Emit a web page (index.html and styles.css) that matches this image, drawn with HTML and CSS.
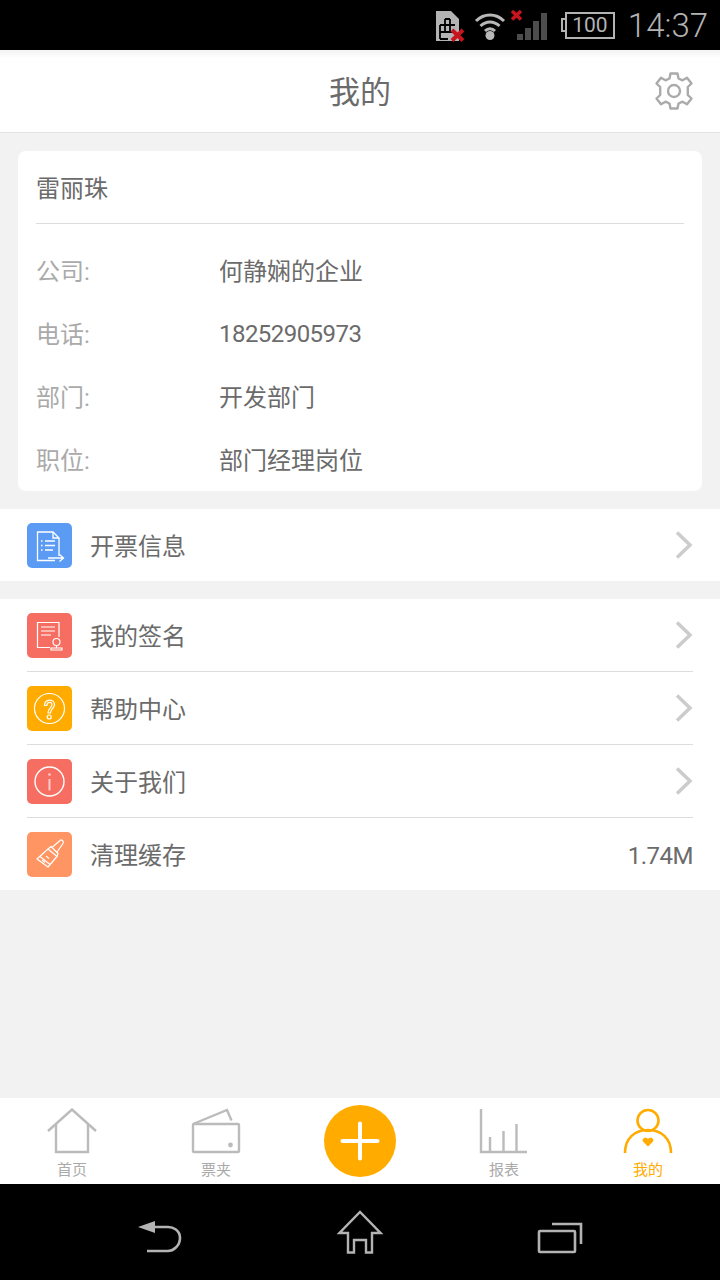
FILE: index.html
```html
<!DOCTYPE html>
<html lang="zh-CN">
<head>
<meta charset="utf-8">
<title>我的</title>
<link rel="stylesheet" href="styles.css">
</head>
<body>
<div class="app">
  <div class="statusbar">
    <svg class="st-sim" width="29" height="32" viewBox="0 0 29 32">
      <path d="M0 1H15L23 9V31H0Z" fill="#b3b3b3"/>
      <path d="M9 15H19M9 9V22M14 9H9M14 9V22M4 22H17M4 15V29M4 15H9M4 29H12" fill="none" stroke="#000" stroke-width="1.800"/>
      <path d="M16 20L27 30.500M27 20L16 30.500" stroke="#c8141e" stroke-width="4"/>
    </svg>
    <svg class="st-wifi" width="32" height="30" viewBox="0 0 32 30">
      <path d="M2 10C10 2 22 2 30 10M6.500 15C12 9.500 20 9.500 25.500 15M11 20C14 17 18 17 21 20" fill="none" stroke="#b8b8b8" stroke-width="3"/>
      <circle cx="16" cy="24.500" r="4.500" fill="#b8b8b8"/>
    </svg>
    <svg class="st-signal" width="38" height="32" viewBox="0 0 38 32">
      <path d="M1 1L10 9.500M10 1L1 9.500" stroke="#c8141e" stroke-width="3.500"/>
      <path d="M6 24h6v6H6zM14 18h6v12h-6zM22 11h6v19h-6zM30 3h6v27h-6z" fill="#4d4d4d"/>
    </svg>
    <div class="st-battery">
      <span class="st-battery-cap"></span>
      <span class="st-battery-body">100</span>
    </div>
    <span class="st-time">14:37</span>
  </div>

  <header class="topbar">
    <h1 class="topbar-title">我的</h1>
    <svg class="topbar-gear" width="40" height="40" viewBox="0 0 40 40">
      <path d="M16.500 2.500H23.500L24.500 7.500L28.500 9.300L33 6.700L37.500 12.500L33.800 16L33.800 24L37.500 27.500L33 33.300L28.500 30.700L24.500 32.500L23.500 37.500H16.500L15.500 32.500L11.500 30.700L7 33.300L2.500 27.500L6.200 24L6.200 16L2.500 12.500L7 6.700L11.500 9.300L15.500 7.500Z" fill="none" stroke="#aaa" stroke-width="2.400" stroke-linejoin="round"/>
      <circle cx="20" cy="20" r="6" fill="none" stroke="#aaa" stroke-width="2.400"/>
    </svg>
  </header>

  <main class="content">
    <section class="card">
      <div class="card-name">雷丽珠</div>
      <dl class="info">
        <div class="info-row"><dt>公司:</dt><dd>何静娴的企业</dd></div>
        <div class="info-row"><dt>电话:</dt><dd class="num">18252905973</dd></div>
        <div class="info-row"><dt>部门:</dt><dd>开发部门</dd></div>
        <div class="info-row"><dt>职位:</dt><dd>部门经理岗位</dd></div>
      </dl>
    </section>

    <ul class="group">
      <li class="item">
        <span class="item-icon blue">
          <svg width="45" height="45" viewBox="0 0 45 45" fill="none" stroke="#fff" stroke-width="1.300">
            <path d="M32 33V15L26 9H10.500V37.500H28"/>
            <path d="M26 9V15H32"/>
            <path d="M18 18H28M18 22.500H28M18 27H26M14 18H15.500M14 22.500H15.500M14 27H15.500"/>
            <path d="M21 35H36M32.500 31.500L36.500 35L32.500 38.500"/>
          </svg>
        </span>
        <span class="item-label">开票信息</span>
        <svg class="chevron" width="18" height="28" viewBox="0 0 18 28"><path d="M2 1.500L15 14L2 26.500" fill="none" stroke="#ccc" stroke-width="3.500"/></svg>
      </li>
    </ul>

    <ul class="group">
      <li class="item">
        <span class="item-icon red">
          <svg width="45" height="45" viewBox="0 0 45 45" fill="none" stroke="#fff" stroke-width="1.200">
            <path d="M23 34.500H10.500V9.500H32V24"/>
            <path d="M14 14H28M14 18H28M14 22H24"/>
            <circle cx="29.500" cy="29" r="3.500"/>
            <path d="M29.500 32.500V35M24 35H35V37H24Z"/>
          </svg>
        </span>
        <span class="item-label">我的签名</span>
        <svg class="chevron" width="18" height="28" viewBox="0 0 18 28"><path d="M2 1.500L15 14L2 26.500" fill="none" stroke="#ccc" stroke-width="3.500"/></svg>
      </li>
      <li class="item">
        <span class="item-icon amber">
          <svg width="45" height="45" viewBox="0 0 45 45" fill="none" stroke="#fff" stroke-width="1.200">
            <circle cx="22.500" cy="22.500" r="15"/>
            <path d="M17.500 19.500C17.500 12.500 27.500 12.500 27.500 18.500C27.500 22.500 23.500 22.500 23.500 27H21C21 22 25 22 25 18.500C25 15.500 20 15.500 19.800 19.500Z"/>
            <circle cx="22.200" cy="31" r="2"/>
          </svg>
        </span>
        <span class="item-label">帮助中心</span>
        <svg class="chevron" width="18" height="28" viewBox="0 0 18 28"><path d="M2 1.500L15 14L2 26.500" fill="none" stroke="#ccc" stroke-width="3.500"/></svg>
      </li>
      <li class="item">
        <span class="item-icon red">
          <svg width="45" height="45" viewBox="0 0 45 45" fill="none" stroke="#fff">
            <circle cx="22.500" cy="22.500" r="14.500" stroke-width="1.400"/>
            <path d="M22.500 20V31.500" stroke="#fcc" stroke-width="2"/>
            <circle cx="22.500" cy="15.500" r="1.300" fill="#fcc" stroke="none"/>
          </svg>
        </span>
        <span class="item-label">关于我们</span>
        <svg class="chevron" width="18" height="28" viewBox="0 0 18 28"><path d="M2 1.500L15 14L2 26.500" fill="none" stroke="#ccc" stroke-width="3.500"/></svg>
      </li>
      <li class="item">
        <span class="item-icon orange">
          <svg width="45" height="45" viewBox="0 0 45 45" fill="none" stroke="#fff" stroke-width="1.200" stroke-linejoin="round">
            <path d="M10 27L21 35L30 24.500L21 17Z"/>
            <path d="M13 24.500L23 32.500"/>
            <path d="M21 17L24 14.500L31 21.500L30 24.500"/>
            <path d="M25 15.500L33 8.500C34.500 7 37.500 9.500 36 11.500L30 20"/>
            <path d="M15 28L18 30.500M19 24L22 26.500"/>
          </svg>
        </span>
        <span class="item-label">清理缓存</span>
        <span class="item-value">1.74M</span>
      </li>
    </ul>
  </main>

  <nav class="tabs">
    <div class="tab">
      <svg width="50" height="46" viewBox="0 0 50 46" fill="none" stroke="#bbb" stroke-width="2.400">
        <path d="M1 23L25 1.500L49 23"/>
        <path d="M9 16V44H41V16"/>
      </svg>
      <span>首页</span>
    </div>
    <div class="tab">
      <svg width="50" height="46" viewBox="0 0 50 46" fill="none" stroke="#bbb" stroke-width="2.400">
        <rect x="2" y="16" width="46" height="28" rx="1"/>
        <path d="M2 16L36 2L40.500 12.500"/>
        <circle cx="39.500" cy="37" r="2.400" fill="#bbb" stroke="none"/>
      </svg>
      <span>票夹</span>
    </div>
    <div class="tab tab-add">
      <span class="tab-add-btn">
        <svg width="40" height="40" viewBox="0 0 40 40"><path d="M20 2.500V37.500M2.500 20H37.500" stroke="#fff" stroke-width="4" stroke-linecap="round"/></svg>
      </span>
    </div>
    <div class="tab">
      <svg width="50" height="46" viewBox="0 0 50 46" fill="none" stroke="#bbb" stroke-width="2.400">
        <path d="M2 1V44H48"/>
        <path d="M11 44V29M24.500 44V23M37.500 44V16"/>
      </svg>
      <span>报表</span>
    </div>
    <div class="tab tab-active">
      <svg width="50" height="46" viewBox="0 0 50 46" fill="none" stroke="#ffab00" stroke-width="2.600">
        <circle cx="25" cy="12.500" r="10.500"/>
        <path d="M2 45C2 30 12 22 25 22C38 22 48 30 48 45"/>
        <path d="M25 38.500L20 33.500C18 30.500 23 28 25 31C27 28 32 30.500 30 33.500Z" fill="#ffab00" stroke="none"/>
      </svg>
      <span>我的</span>
    </div>
  </nav>

  <div class="navbar">
    <svg width="46" height="34" viewBox="0 0 46 34" fill="none">
      <path d="M1 7L18 1V13Z" fill="#b3b3b3"/>
      <path d="M16 7H31C36 7 43 10 43 18C43 26 36 31 31 31H10" stroke="#b3b3b3" stroke-width="2.600"/>
    </svg>
    <svg width="46" height="44" viewBox="0 0 46 44" fill="none">
      <path d="M11 42.500V23H2.500L23 2L43.500 23H35V42.500H29V30H17V42.500Z" stroke="#b3b3b3" stroke-width="2.400"/>
    </svg>
    <svg width="46" height="34" viewBox="0 0 46 34" fill="none" stroke="#b3b3b3" stroke-width="2.600">
      <rect x="2" y="11" width="36" height="21" rx="1"/>
      <path d="M15 4H44V24"/>
    </svg>
  </div>
</div>
</body>
</html>
```

FILE: styles.css
```css
* {
  box-sizing: border-box;
}

html, body {
  margin: 0;
  padding: 0;
}

body {
  font-family: Roboto, "Noto Sans CJK SC", sans-serif;
  background: #f2f2f2;
  color: #6b6b6b;
}

.app {
  width: 720px;
  height: 1280px;
  display: flex;
  flex-direction: column;
  overflow: hidden;
}

/* System status bar */
.statusbar {
  height: 50px;
  background: #000;
  display: flex;
  align-items: center;
  justify-content: flex-end;
  padding-right: 12px;
  color: #b3b3b3;
  flex: none;
}

.st-sim {
  margin-right: 9px;
  margin-top: 2px;
}

.st-wifi {
  margin-right: 5px;
  margin-top: 2px;
}

.st-signal {
  margin-right: 12px;
  margin-top: 2px;
}

.st-battery {
  display: flex;
  align-items: center;
  margin-right: 13px;
}

.st-battery-cap {
  width: 4px;
  height: 14px;
  border: 2px solid #b3b3b3;
  border-right: 0;
}

.st-battery-body {
  width: 50px;
  height: 27px;
  border: 2px solid #b3b3b3;
  font-size: 21px;
  line-height: 23px;
  text-align: center;
}

.st-time {
  font-size: 33px;
  font-weight: 300;
  line-height: 50px;
  padding-top: 2px;
}

/* Title bar */
.topbar {
  height: 83px;
  background: linear-gradient(#f3f3f3, #fff 8px);
  border-bottom: 1px solid #e2e2e2;
  display: flex;
  align-items: center;
  justify-content: center;
  position: relative;
  flex: none;
}

.topbar-title {
  margin: 0 0 4px;
  font-size: 31px;
  font-weight: 400;
  color: #6b6b6b;
}

.topbar-gear {
  position: absolute;
  right: 26px;
  top: 21px;
}

/* Page body */
.content {
  flex: 1;
  padding-top: 18px;
}

.card {
  margin: 0 18px;
  background: #fff;
  border-radius: 8px;
  padding: 0 18px;
  height: 340px;
}

.card-name {
  height: 73px;
  line-height: 76px;
  font-size: 24px;
  border-bottom: 1px solid #ddd;
  color: #6b6b6b;
}

.info {
  margin: 0;
  padding-top: 14px;
}

.info-row {
  display: flex;
  height: 63px;
  align-items: center;
  font-size: 24px;
}

.info-row dt {
  width: 183px;
  color: #aaa;
}

.info-row dd {
  margin: 0;
  color: #6b6b6b;
}

.info-row .num {
  padding-top: 2px;
  letter-spacing: -0.55px;
}

.group {
  list-style: none;
  margin: 18px 0 0;
  padding: 0 27px;
  background: #fff;
}

.item {
  height: 73px;
  display: flex;
  align-items: center;
  border-bottom: 1px solid #ddd;
}

.item:last-child {
  height: 72px;
  border-bottom: 0;
}

.item-icon {
  width: 45px;
  height: 45px;
  border-radius: 5px;
  display: block;
  margin-right: 18px;
  flex: none;
}

.item-icon svg {
  display: block;
}

.blue { background: #5b9bf4; }
.red { background: #f66e62; }
.amber { background: #ffab00; }
.orange { background: #ff9562; }

.item-label {
  flex: 1;
  font-size: 24px;
  padding-bottom: 2px;
  color: #6b6b6b;
}

.item-value {
  font-size: 24px;
  letter-spacing: -0.5px;
  padding-top: 4px;
  color: #6b6b6b;
}

/* Bottom tabs */
.tabs {
  height: 86px;
  background: #fff;
  display: grid;
  grid-template-columns: repeat(5, 1fr);
  flex: none;
}

.tab {
  display: flex;
  flex-direction: column;
  align-items: center;
  padding-top: 10px;
  font-size: 15px;
  line-height: 20px;
  color: #aaa;
}

.tab svg {
  display: block;
  margin-bottom: 6px;
}

.tab-active {
  color: #ffab00;
}

.tab-add {
  padding-top: 7px;
}

.tab-add-btn {
  width: 72px;
  height: 72px;
  border-radius: 50%;
  background: #ffab00;
  display: flex;
  align-items: center;
  justify-content: center;
}

.tab-add-btn svg {
  margin: 0;
}

/* System navigation bar */
.navbar {
  height: 96px;
  background: #000;
  flex: none;
  display: grid;
  grid-template-columns: repeat(3, 200px);
  justify-content: center;
  justify-items: center;
  align-items: end;
  padding-bottom: 26px;
}
```
